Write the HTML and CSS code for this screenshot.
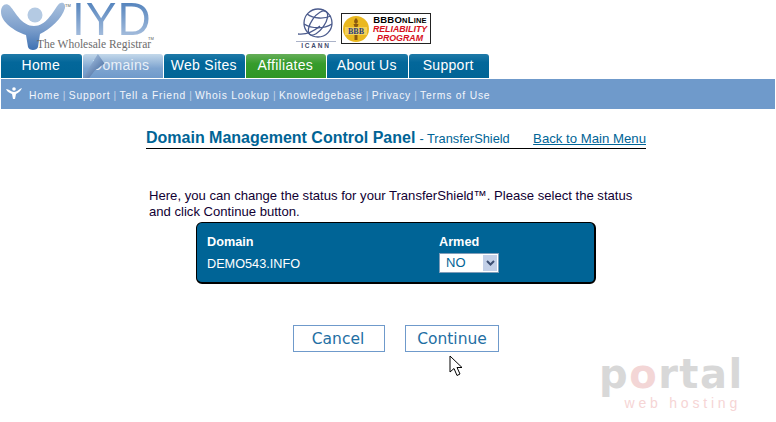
FILE: index.html
```html
<!DOCTYPE html>
<html lang="en">
<head>
    <meta charset="UTF-8">
    <title>Domain Management Control Panel - TransferShield</title>
    <link rel="stylesheet" href="styles.css">
</head>
<body>
    <div class="page">
        <div class="top">
            <div class="logo">
                <svg class="logo-mark" width="72" height="52" viewBox="0 0 72 52">
                    <defs>
                        <linearGradient id="markfill" x1="0" y1="0" x2="0" y2="1">
                            <stop offset="0" stop-color="#a9c1de"/>
                            <stop offset="0.55" stop-color="#7c9ecb"/>
                            <stop offset="1" stop-color="#3f72b3"/>
                        </linearGradient>
                    </defs>
                    <path fill="url(#markfill)" d="M1 12 C1 5 6 2 10 6 C16 13 22 26 34 26 C46 26 52 13 58 5 C61 1 66 3 65 8 C62 19 50 29 40 34 L38 47 C37 51 29 51 28 47 L26 35 C14 31 1 22 1 12 Z"/>
                    <circle cx="35" cy="15" r="7.5" fill="#b4cae3"/>
                </svg>
                <div class="logo-name">
                    <span class="iyd">IYD</span>
                    <span class="tagline">The Wholesale Registrar</span>
                </div>
                <span class="tm tm-mark">TM</span>
                <span class="tm tm-tag">TM</span>
            </div>
            <div class="icann">
                <svg width="36" height="31" viewBox="0 0 36 31" fill="none" stroke="#4a5a8c" stroke-width="1.3">
                    <circle cx="20" cy="15" r="14"/>
                    <ellipse cx="20" cy="15" rx="6.5" ry="14" transform="rotate(35 20 15)"/>
                    <path d="M9 6 C16 11 26 11 33 8"/>
                    <path d="M6 16 C14 21 26 21 34 16"/>
                    <path d="M0 26 C8 27 15 24 22 18"/>
                </svg>
                <span class="icann-rule"></span>
                <span class="icann-text">ICANN</span>
            </div>
            <div class="bbb">
                <svg class="bbb-seal" width="26" height="26" viewBox="0 0 26 26">
                    <circle cx="13" cy="13" r="13" fill="#eab81f"/>
                    <path d="M13 2 C16 5 15 7 13 8 C11 7 10 5 13 2 Z M10.5 8 L15.5 8 L14.5 11 L11.5 11 Z M11.5 19 L14.5 19 L14.5 24 L11.5 24 Z" fill="#8a5a10"/>
                    <rect x="2" y="11" width="22" height="8" fill="#f3d15a"/>
                    <text x="13" y="18" text-anchor="middle" class="bbb-seal-text">BBB</text>
                </svg>
                <div class="bbb-text">
                    <span class="bbb-online">BBBO<small>N</small>L<small>INE</small></span>
                    <span class="bbb-red">RELIABILITY</span>
                    <span class="bbb-red">PROGRAM</span>
                </div>
            </div>
        </div>

        <div class="tabs">
            <a class="tab">Home</a>
            <a class="tab tab-active"><span class="tab-curl"></span>Domains</a>
            <a class="tab">Web Sites</a>
            <a class="tab tab-green">Affiliates</a>
            <a class="tab">About Us</a>
            <a class="tab">Support</a>
        </div>

        <div class="subnav">
            <svg class="subnav-icon" width="16" height="12" viewBox="0 0 16 12">
                <path fill="#fff" d="M0 2 C3 2 5 5 8 5 C11 5 13 2 16 1 C15 4 12 6 10 7 L9 12 L7 12 L6 7 C4 6 1 5 0 2 Z"/>
                <circle cx="8" cy="2" r="1.8" fill="#fff"/>
            </svg>
            <span>Home</span><i>|</i><span>Support</span><i>|</i><span>Tell a Friend</span><i>|</i><span>Whois Lookup</span><i>|</i><span>Knowledgebase</span><i>|</i><span>Privacy</span><i>|</i><span>Terms of Use</span>
        </div>

        <div class="main">
            <div class="title-row">
                <h1>Domain Management Control Panel</h1>
                <span class="title-sub">- TransferShield</span>
                <a class="back">Back to Main Menu</a>
            </div>

            <p class="intro">Here, you can change the status for your TransferShield™. Please select the status and click Continue button.</p>

            <div class="panel">
                <div class="panel-col panel-domain">
                    <b>Domain</b>
                    <span>DEMO543.INFO</span>
                </div>
                <div class="panel-col">
                    <b>Armed</b>
                    <div class="fake-select">
                        <span class="fake-value">NO</span>
                        <span class="fake-arrow">
                            <svg width="9" height="6" viewBox="0 0 9 6"><path d="M1 1 L4.5 4.5 L8 1" fill="none" stroke="#3d4f73" stroke-width="2"/></svg>
                        </span>
                    </div>
                </div>
            </div>

            <div class="actions">
                <a class="btn btn-cancel">Cancel</a>
                <a class="btn btn-continue">Continue</a>
            </div>
        </div>
    </div>

    <!-- mouse pointer caught in the screenshot -->
    <svg class="pointer" width="14" height="22" viewBox="0 0 14 22">
        <path d="M1 1 L1 17 L5 13.5 L8 20.5 L11 19 L8 12.5 L13 12.5 Z" fill="#fff" stroke="#000" stroke-width="1"/>
    </svg>

    <div class="watermark">
        <span class="wm-portal">p<em>o</em>rtal</span>
        <span class="wm-sub">web hosting</span>
    </div>
</body>
</html>
```

FILE: styles.css
```css
html, body {
    margin: 0;
    height: 100%;
    overflow: hidden;
    background: #fff;
    font-family: "Liberation Sans", Arial, sans-serif;
}
.page {
    width: 776px;
}

/* logos */
.top {
    display: flex;
    height: 54px;
}
.logo {
    position: relative;
    display: flex;
    width: 296px;
}
.logo-mark {
    flex: none;
}
.logo-name {
    display: flex;
    flex-direction: column;
    margin-left: -35px;
    position: relative;
}
.iyd {
    padding: 1px 0 0 35px;
    font-size: 46px;
    line-height: 37px;
    letter-spacing: 1px;
    height: 37px;
    background: linear-gradient(#4f80bb, #a9c0de);
    -webkit-background-clip: text;
    background-clip: text;
    color: transparent;
}
.tagline {
    font-family: "Liberation Serif", serif;
    font-size: 11.5px;
    line-height: 13px;
    color: #6c6c6c;
    white-space: nowrap;
}
.tm {
    position: absolute;
    font-size: 4px;
    color: #555;
}
.tm-mark {
    left: 65px;
    top: 3px;
}
.tm-tag {
    left: 148px;
    top: 36px;
}
.icann {
    display: flex;
    flex-direction: column;
    align-items: center;
    width: 40px;
    margin-right: 4px;
    padding-top: 8px;
    box-sizing: border-box;
}
.icann-rule {
    flex: none;
    width: 40px;
    height: 1px;
    background: #aab2c8;
    margin-top: 2px;
}
.icann-text {
    font-size: 6.5px;
    font-weight: bold;
    letter-spacing: 1.8px;
    line-height: 8px;
    color: #3f4a6b;
}
.bbb {
    display: flex;
    align-items: center;
    gap: 1px;
    width: 90px;
    height: 31px;
    margin: 13px 0 0 1px;
    border: 1px solid #222;
    box-sizing: border-box;
}
.bbb-seal {
    flex: none;
    margin-left: 1px;
}
.bbb-seal-text {
    font: bold 8px "Liberation Serif", serif;
    fill: #2b3d80;
}
.bbb-text {
    display: flex;
    flex-direction: column;
    align-items: center;
    flex: 1;
    font-weight: bold;
    font-style: italic;
    font-size: 8.8px;
    line-height: 9px;
}
.bbb-online {
    color: #000;
    font-style: normal;
    font-size: 9.5px;
    letter-spacing: 0.2px;
}
.bbb-online small {
    font-size: 7.5px;
}
.bbb-red {
    color: #d6101c;
}

/* main navigation */
.tabs {
    display: flex;
    gap: 1px;
    height: 24px;
    padding-left: 1px;
}
.tab {
    position: relative;
    width: 80.5px;
    padding-right: 1px;
    box-sizing: border-box;
    border-radius: 3px 3px 0 0;
    background: linear-gradient(#1f7aa8, #03679a 35%, #006496);
    color: #fff;
    font-size: 14px;
    line-height: 23px;
    letter-spacing: 0.3px;
    text-align: center;
}
.tab-active {
    overflow: hidden;
    padding-right: 4px;
    background: linear-gradient(#c3d8ea, #7ea4d0 60%, #6f9acb);
    color: #e9f0f8;
}
.tab-curl {
    position: absolute;
    left: 0;
    top: 0;
    width: 22px;
    height: 24px;
    background: linear-gradient(135deg, #c4d6e8 0%, #7f9ec6 45%, #34588f 100%);
    clip-path: polygon(0 100%, 70% 0, 100% 40%, 55% 70%, 30% 100%);
}
.tab-green {
    background: linear-gradient(#66ae59, #369c2c 40%, #2f9625);
}
.subnav {
    display: flex;
    align-items: center;
    height: 30px;
    margin: 1px 1px 0 1px;
    padding: 2px 0 0 5px;
    box-sizing: border-box;
    background: #6f9acb;
    color: #f3f6fb;
    font-size: 10.3px;
    letter-spacing: 0.8px;
}
.subnav-icon {
    margin: -4px 7px 0 0;
}
.subnav i {
    font-style: normal;
    color: #c3d2e8;
    margin: 0 3.2px;
    letter-spacing: 0;
}

/* content */
.main {
    width: 500px;
    margin-left: 146px;
    padding-top: 19px;
}
.title-row {
    display: flex;
    align-items: baseline;
    height: 20px;
    border-bottom: 1px solid #000;
    color: #006496;
}
.title-row h1 {
    margin: 0;
    font-size: 16px;
    line-height: 20px;
}
.title-sub {
    margin-left: 4px;
    font-size: 12.8px;
}
.back {
    margin-left: auto;
    font-size: 13.2px;
    text-decoration: underline;
}
.intro {
    margin: 39px 0 0 3px;
    width: 490px;
    color: #110033;
    font-size: 13.1px;
    line-height: 16px;
}
.panel {
    display: flex;
    width: 400px;
    height: 62px;
    margin: 2px 0 0 50px;
    padding: 11px 0 0 10px;
    box-sizing: border-box;
    background: #006496;
    border: 1px solid #000;
    border-width: 1px 2px 2px 1px;
    border-radius: 6px;
    color: #fff;
    font-size: 12.7px;
}
.panel-col {
    display: flex;
    flex-direction: column;
}
.panel-col b {
    line-height: 16px;
}
.panel-domain {
    width: 232px;
}
.panel-domain span {
    margin-top: 6px;
    line-height: 16px;
}
.fake-select {
    display: flex;
    width: 60px;
    height: 20px;
    margin-top: 3px;
    box-sizing: border-box;
    border: 1px solid #7f9db9;
    background: #fff;
    color: #006496;
    font-size: 13px;
}
.fake-value {
    flex: 1;
    padding-left: 6px;
    line-height: 18px;
}
.fake-arrow {
    display: flex;
    align-items: center;
    justify-content: center;
    width: 16px;
    background: #c3d0e8;
    border: 1px solid #fff;
    box-sizing: border-box;
}
.actions {
    display: flex;
    gap: 20px;
    margin: 41px 0 0 147px;
}
.btn {
    box-sizing: border-box;
    height: 27px;
    border: 1px solid #6f9acb;
    color: #1f6fa3;
    font-family: "DejaVu Sans", sans-serif;
    font-size: 15.5px;
    line-height: 27px;
    text-align: center;
}
.btn-cancel {
    width: 92px;
    padding-right: 2px;
}
.btn-continue {
    width: 94px;
}

/* things lying over the page */
.pointer {
    position: absolute;
    left: 449px;
    top: 355px;
}
.watermark {
    position: absolute;
    left: 599px;
    top: 352px;
    width: 146px;
}
.wm-portal {
    display: block;
    font-family: "DejaVu Sans", sans-serif;
    font-weight: bold;
    font-size: 40px;
    line-height: 45px;
    letter-spacing: 1.5px;
    color: #d8d8d8;
}
.wm-portal em {
    font-style: normal;
    color: #f3d6d6;
}
.wm-sub {
    display: block;
    margin: -2px 4px 0 0;
    font-size: 14px;
    line-height: 16px;
    letter-spacing: 3.8px;
    color: #f6d5d5;
    text-align: right;
}
```
